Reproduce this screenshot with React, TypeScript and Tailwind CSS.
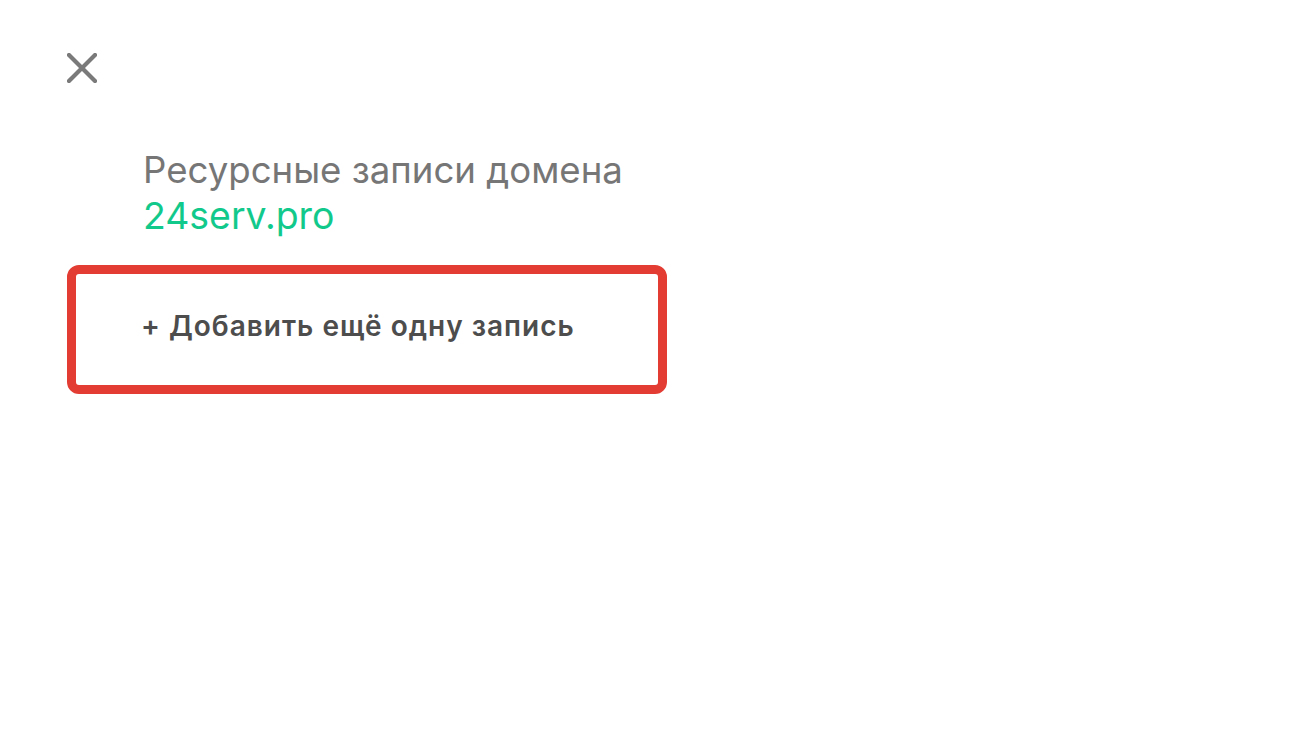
import React from 'react';

const App = () => {
  return (
    <div className="w-[1306px] h-[754px] bg-white relative" style={{ fontFamily: 'Inter, Roboto, "Noto Sans", sans-serif' }}>
      <div className="pt-[53px] pl-[67px]">
        <button className="block w-[30px] h-[30px]" aria-label="Закрыть">
          <svg viewBox="0 0 30 30" width="30" height="30">
            <path d="M2 2 L28 28 M28 2 L2 28" stroke="#7a7a7a" strokeWidth="4.2" strokeLinecap="square" />
          </svg>
        </button>
      </div>
      <div className="pl-[143px] pt-[64px]">
        <h1 className="text-[36.6px] leading-[46px] text-[#767676] font-normal">Ресурсные записи домена</h1>
        <div className="text-[37.4px] leading-[46px] text-[#12c98c]">24serv.pro</div>
      </div>
      <div className="ml-[67px] mt-[26px] w-[600px] h-[129px] border-[9px] border-[#e33c32] rounded-[12px] flex items-center pl-[65px] pb-[8px]">
        <span className="text-[28px] font-semibold tracking-[1px] text-[#4d4d4d]">+ Добавить ещё одну запись</span>
      </div>
    </div>
  );
};

export default App;
